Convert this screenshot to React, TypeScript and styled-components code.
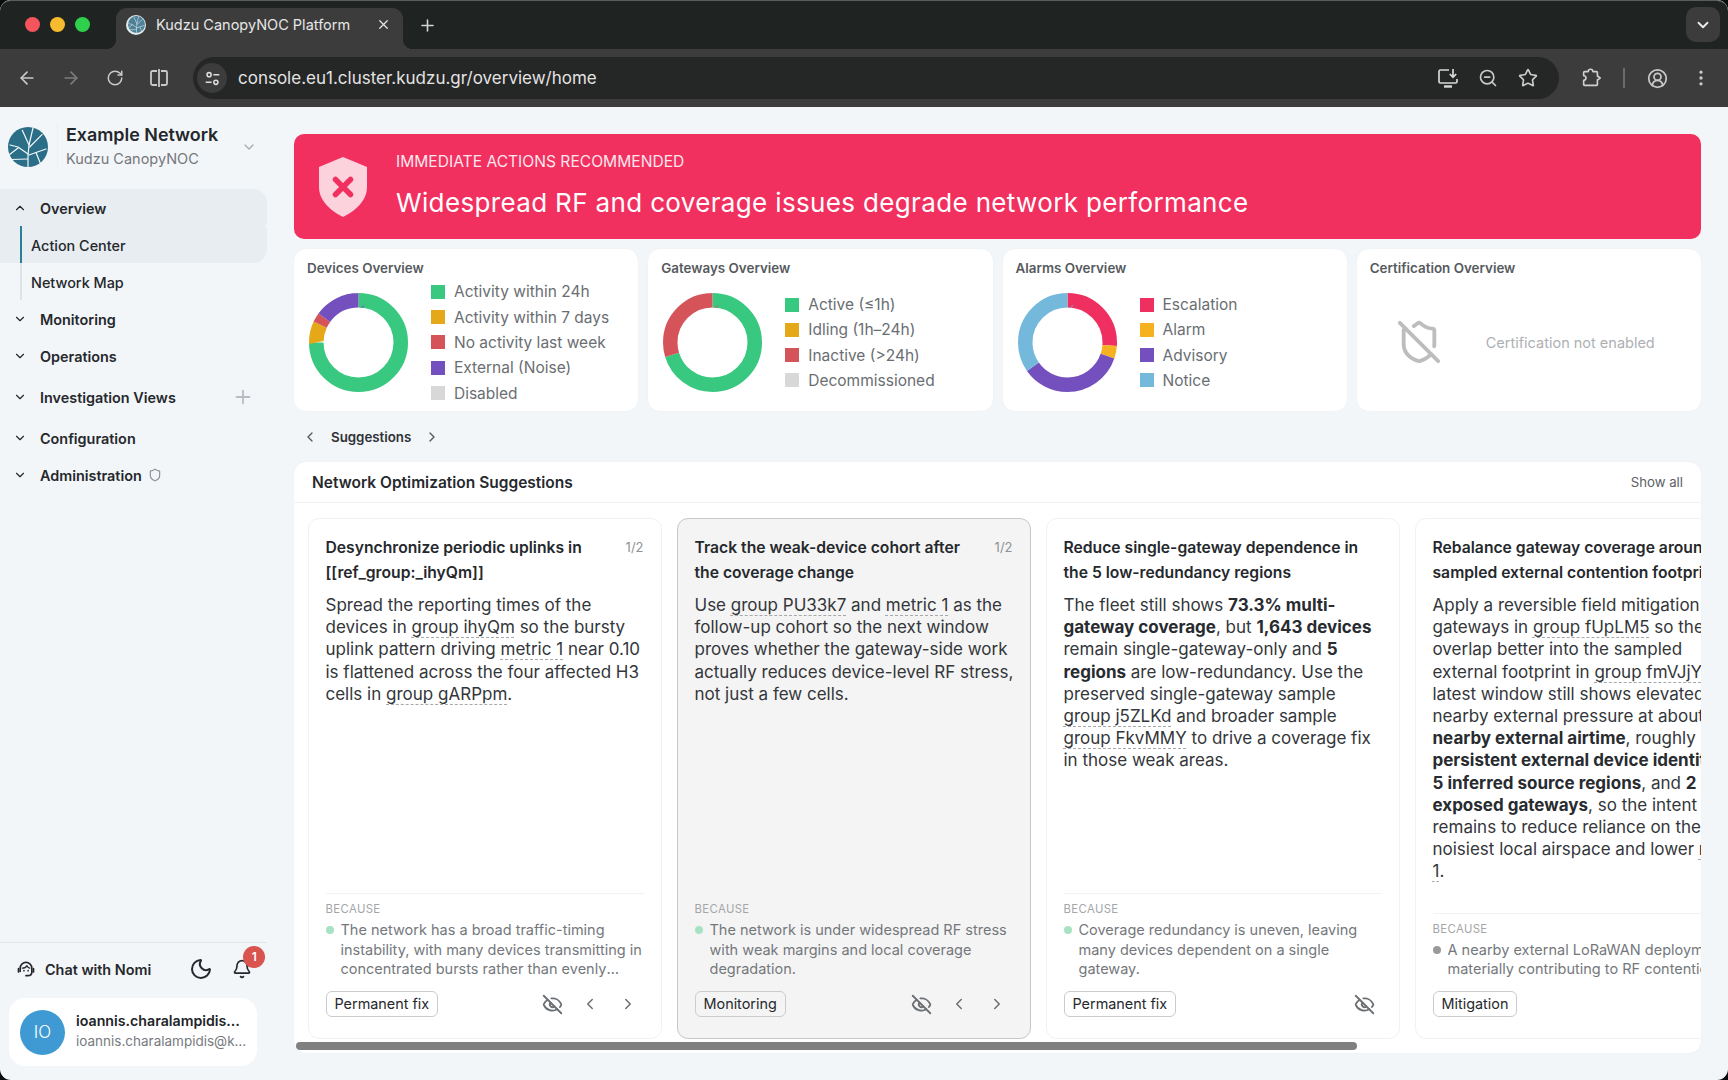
import React from 'react';
import styled, {createGlobalStyle} from 'styled-components';
import {
  ArrowLeft,
  ArrowRight,
  Bell,
  ChevronDown,
  ChevronLeft,
  ChevronRight,
  ChevronUp,
  CircleUserRound,
  EllipsisVertical,
  EyeOff,
  Moon,
  Plus,
  RotateCw,
  Shield,
  ShieldOff,
  Star,
  X,
  ZoomOut
} from 'lucide-react';

const GlobalStyle = createGlobalStyle`
  html, body {
    margin: 0;
    padding: 0;
    height: 100%;
    background: #0c0c0c;
    overflow: hidden;
  }
  #root {
    height: 100%;
  }
  * {
    box-sizing: border-box;
  }
`;

const Frame = styled.div`
  display: flex;
  flex-direction: column;
  width: 1728px;
  height: 1080px;
  border-radius: 11px;
  overflow: hidden;
  background: #f3f6f9;
  font-family: Inter, 'Liberation Sans', sans-serif;
  color: #2c2f33;
`;

const TabStrip = styled.div`
  display: flex;
  align-items: flex-end;
  height: 49px;
  flex: none;
  padding-left: 25px;
  background: #1f2321;
  border-top: 1px solid #5a5d5c;
  border-radius: 11px 11px 0 0;
`;

const Lights = styled.div`
  display: flex;
  gap: 10px;
  align-self: flex-start;
  margin-top: 16px;
`;

const Light = styled.span<{$color: string}>`
  width: 15px;
  height: 15px;
  border-radius: 50%;
  background: ${(p) => p.$color};
`;

const Tab = styled.div`
  position: relative;
  display: flex;
  align-items: center;
  width: 287px;
  height: 41px;
  margin-left: 26px;
  padding: 0 12px 8px 10px;
  background: #3c3c3c;
  border-radius: 11px 11px 0 0;
  color: #e6e6e6;
  font-size: 14.5px;

  &::before,
  &::after {
    content: '';
    position: absolute;
    bottom: 0;
    width: 10px;
    height: 10px;
  }
  &::before {
    left: -10px;
    background: radial-gradient(circle at 0 0, transparent 10px, #3c3c3c 10.5px);
  }
  &::after {
    right: -10px;
    background: radial-gradient(circle at 100% 0, transparent 10px, #3c3c3c 10.5px);
  }
`;

const Favicon = styled.div`
  display: flex;
  align-items: center;
  justify-content: center;
  flex: none;
  width: 20px;
  height: 20px;
  border-radius: 50%;
  background: #e3eaee;
`;

const TabTitle = styled.span`
  flex: 1;
  margin-left: 10px;
`;

const NewTab = styled.div`
  display: flex;
  align-items: center;
  justify-content: center;
  align-self: flex-start;
  width: 24px;
  height: 24px;
  margin: 12px 0 0 12px;
  color: #d5d5d5;
`;

const TabMenu = styled.div`
  display: flex;
  align-items: center;
  justify-content: center;
  align-self: flex-start;
  width: 34px;
  height: 35px;
  margin: 6px 8px 0 auto;
  border-radius: 10px;
  background: #3c3c3c;
  color: #e8e8e8;
`;

const Toolbar = styled.div`
  display: flex;
  align-items: center;
  flex: none;
  height: 58px;
  padding: 0 5px;
  background: #3c3c3c;
  color: #c9c9c9;
`;

const ToolSlot = styled.div<{$width?: number; $dim?: boolean}>`
  display: flex;
  align-items: center;
  justify-content: center;
  flex: none;
  width: ${(p) => p.$width ?? 44}px;
  height: 100%;
  color: ${(p) => (p.$dim ? '#7c7c7c' : 'inherit')};
`;

const AddressBar = styled.div`
  display: flex;
  align-items: center;
  flex: 1;
  height: 42px;
  margin: 0 10px 0 12px;
  padding: 0 11px 0 4px;
  border-radius: 21px;
  background: #252626;
`;

const SiteInfo = styled.div`
  display: flex;
  align-items: center;
  justify-content: center;
  width: 30px;
  height: 30px;
  border-radius: 50%;
  background: #3c3c3c;
`;

const Url = styled.span`
  flex: 1;
  margin-left: 11px;
  color: #e3e3e3;
  font-size: 17px;
`;

const ToolDivider = styled.div`
  display: flex;
  justify-content: center;
  flex: none;
  width: 22px;

  &::after {
    content: '';
    width: 1.5px;
    height: 20px;
    background: #6b6b6b;
  }
`;

const Main = styled.div`
  display: flex;
  flex: 1;
  min-height: 0;
`;

const Sidebar = styled.aside`
  display: flex;
  flex-direction: column;
  flex: none;
  width: 294px;
`;

const Brand = styled.div`
  display: flex;
  align-items: center;
  height: 82px;
  padding: 0 0 3px 8px;
`;

const BrandText = styled.div`
  display: flex;
  flex-direction: column;
  gap: 3px;
  height: 46px;
  margin: 0 0 2px 9px;
  padding-left: 8px;
  border-left: 1px solid #edf0f3;
`;

const BrandName = styled.div`
  font-size: 17.9px;
  line-height: 24px;
  font-weight: 600;
  color: #24272b;
`;

const BrandSub = styled.div`
  font-size: 14.5px;
  line-height: 18px;
  color: #73777c;
`;

const BrandChevron = styled.div`
  display: flex;
  margin-left: 23px;
  color: #a7abb0;
`;

const NavList = styled.nav`
  display: flex;
  flex-direction: column;
  width: 267px;
`;

const NavRow = styled.div<{$active?: boolean; $tall?: boolean}>`
  display: flex;
  align-items: center;
  gap: 13px;
  height: ${(p) => (p.$tall ? 45 : 37)}px;
  padding: 1px 0 0 13px;
  background: ${(p) => (p.$active ? '#e7edf0' : 'transparent')};
  border-radius: ${(p) => (p.$active ? '0 14px 4px 0' : '0')};
  font-size: 14.4px;
  font-weight: 600;
  color: #25282c;
`;

const NavExtra = styled.div`
  display: flex;
  margin-left: auto;
  margin-right: 13px;
  color: #b9bdc2;
`;

const NavBadge = styled.div`
  display: flex;
  margin-left: -7px;
  color: #8d9196;
`;

const SubRow = styled.div<{$active?: boolean}>`
  position: relative;
  display: flex;
  align-items: center;
  height: 37px;
  padding: 1px 0 0 31px;
  background: ${(p) => (p.$active ? '#e7edf0' : 'transparent')};
  border-radius: ${(p) => (p.$active ? '0 4px 14px 0' : '0')};
  font-size: 14.4px;
  font-weight: 500;
  color: #25282c;

  &::before {
    content: '';
    position: absolute;
    left: 20px;
    top: 0;
    bottom: 0;
    width: 2px;
    background: ${(p) => (p.$active ? '#2b7f99' : '#dfe3e6')};
  }
`;

const SideFooter = styled.div`
  margin-top: auto;
  padding-bottom: 14px;
`;

const ChatRow = styled.div`
  display: flex;
  align-items: center;
  width: 267px;
  height: 55px;
  padding: 0 0 2px 16px;
  border-top: 1px solid #e2e6ea;
  font-size: 14.4px;
  font-weight: 600;
  color: #25282c;
`;

const ChatLabel = styled.span`
  margin-left: 9px;
`;

const MoonSlot = styled.div`
  display: flex;
  margin-left: 38px;
`;

const BellSlot = styled.div`
  position: relative;
  display: flex;
  margin-left: 19px;
`;

const BellBadge = styled.span`
  position: absolute;
  top: -13px;
  left: 11px;
  width: 22px;
  height: 22px;
  border-radius: 50%;
  background: #d9534f;
  color: #fff;
  font-size: 12px;
  line-height: 22px;
  text-align: center;
`;

const UserCard = styled.div`
  display: flex;
  align-items: center;
  gap: 11px;
  width: 248px;
  height: 68px;
  margin: 1px 0 0 9px;
  padding: 0 0 2px 11px;
  border-radius: 16px;
  background: #fff;
`;

const Avatar = styled.div`
  display: flex;
  align-items: center;
  justify-content: center;
  flex: none;
  width: 45px;
  height: 45px;
  margin-top: 2px;
  border-radius: 50%;
  background: #3f9ad3;
  color: #fff;
  font-size: 17px;
  font-weight: 300;
`;

const UserText = styled.div`
  display: flex;
  flex-direction: column;
  gap: 4px;
  width: 171px;
`;

const UserName = styled.div`
  overflow: hidden;
  text-overflow: ellipsis;
  white-space: nowrap;
  font-size: 14.2px;
  line-height: 17px;
  font-weight: 600;
  color: #212428;
`;

const UserMail = styled(UserName)`
  font-weight: 400;
  font-size: 13.5px;
  color: #777b80;
`;

const Content = styled.main`
  display: flex;
  flex-direction: column;
  flex: 1;
  min-width: 0;
  padding: 27px 27px 27px 0;
`;

const Banner = styled.section`
  display: flex;
  align-items: center;
  flex: none;
  height: 105px;
  padding-left: 25px;
  border-radius: 10px;
  background: #f23060;
  color: #fff;
`;

const BannerText = styled.div`
  margin: 0 0 2px 29px;
`;

const BannerKicker = styled.div`
  font-size: 15.6px;
  line-height: 20px;
  color: #fde6ec;
`;

const BannerTitle = styled.h1`
  margin: 14px 0 0;
  font-size: 26px;
  line-height: 34px;
  font-weight: 400;
  letter-spacing: 0.35px;
`;

const OverviewGrid = styled.div`
  display: grid;
  grid-template-columns: repeat(4, 1fr);
  gap: 10px;
  flex: none;
  height: 162px;
  margin-top: 10px;
`;

const Panel = styled.section`
  display: flex;
  flex-direction: column;
  padding: 11px 13px 2px;
  border-radius: 12px;
  background: #fff;
  box-shadow: 0 0 1px rgba(40, 50, 60, 0.08);
`;

const PanelTitle = styled.h2`
  margin: 0;
  font-size: 13.4px;
  line-height: 16px;
  font-weight: 600;
  color: #565a5e;
`;

const PanelBody = styled.div`
  display: flex;
  align-items: center;
  flex: 1;
  gap: 23px;
  padding-left: 2px;
`;

const Legend = styled.ul`
  display: flex;
  flex-direction: column;
  margin: 0;
  padding: 0;
  list-style: none;
`;

const LegendItem = styled.li`
  display: flex;
  align-items: center;
  gap: 9px;
  height: 25.3px;
  font-size: 15.5px;
  color: #6a6e72;
`;

const Swatch = styled.span<{$color: string}>`
  flex: none;
  width: 14px;
  height: 14px;
  background: ${(p) => p.$color};
`;

const CertBody = styled.div`
  display: flex;
  align-items: center;
  flex: 1;
  gap: 44px;
  padding: 0 0 1px 26px;
  color: #bdbdbd;
`;

const CertText = styled.span`
  font-size: 14.5px;
  color: #adb0b3;
`;

const SectionNav = styled.div`
  display: flex;
  align-items: center;
  flex: none;
  height: 51px;
  padding-left: 8px;
  color: #55595d;
  font-size: 13.3px;
  font-weight: 600;
`;

const SectionName = styled.span`
  margin: 0 13px 0 13px;
  color: #2e3135;
`;

const SuggestionsPanel = styled.section`
  display: flex;
  flex-direction: column;
  flex: 1;
  min-height: 0;
  overflow: hidden;
  border-radius: 12px;
  background: #fff;
  box-shadow: 0 0 1px rgba(40, 50, 60, 0.1);
`;

const SuggestionsHead = styled.header`
  display: flex;
  align-items: center;
  justify-content: space-between;
  flex: none;
  height: 41px;
  padding: 0 18px;
  border-bottom: 1px solid #f1f2f4;
`;

const SuggestionsTitle = styled.h2`
  margin: 0;
  font-size: 15.5px;
  font-weight: 600;
  color: #26292d;
`;

const ShowAll = styled.span`
  font-size: 13.2px;
  color: #5c6064;
`;

const CardRow = styled.div`
  display: flex;
  flex: 1;
  min-height: 0;
  gap: 15px;
  padding: 15px 0 0 13.5px;
  overflow: hidden;
`;

const Card = styled.article<{$selected?: boolean}>`
  display: flex;
  flex-direction: column;
  flex: 0 0 354px;
  padding: 16px 17px 21px;
  border: 1px solid ${(p) => (p.$selected ? '#c6c7c9' : '#f1f2f3')};
  border-radius: 11px;
  background: ${(p) => (p.$selected ? '#f4f4f4' : '#fff')};
`;

const CardHead = styled.div`
  display: flex;
  align-items: flex-start;
  justify-content: space-between;
  gap: 12px;
`;

const CardTitle = styled.h3<{$nowrap?: boolean}>`
  margin: 0;
  font-size: 15.7px;
  line-height: 25px;
  font-weight: 600;
  color: #25282c;
  white-space: ${(p) => (p.$nowrap ? 'nowrap' : 'normal')};
`;

const Pager = styled.span`
  flex: none;
  font-size: 13px;
  line-height: 25px;
  color: #8f9296;
`;

const CardBody = styled.p<{$nowrap?: boolean}>`
  flex: 1;
  margin: 9px -4px 0 0;
  font-size: 17px;
  line-height: 22.2px;
  color: #33363a;
  white-space: ${(p) => (p.$nowrap ? 'nowrap' : 'normal')};

  strong {
    font-weight: 700;
    color: #282b2f;
  }
`;

const Ref = styled.span`
  text-decoration: underline dashed #a6a9ac 1px;
  text-underline-offset: 4px;
`;

const Because = styled.div`
  padding-top: 8px;
  border-top: 1px solid #f1f2f3;
`;

const BecauseLabel = styled.div`
  font-size: 11.3px;
  line-height: 14px;
  letter-spacing: 0.4px;
  color: #a3a6a9;
`;

const BecauseRow = styled.div`
  display: flex;
  gap: 7px;
  margin-top: 4px;
`;

const Dot = styled.span<{$color: string}>`
  flex: none;
  width: 8px;
  height: 8px;
  margin-top: 6px;
  border-radius: 50%;
  background: ${(p) => p.$color};
`;

const BecauseText = styled.div`
  display: -webkit-box;
  -webkit-box-orient: vertical;
  -webkit-line-clamp: 3;
  overflow: hidden;
  font-size: 14.5px;
  line-height: 19.6px;
  color: #74787c;
`;

const CardFoot = styled.div`
  display: flex;
  align-items: center;
  margin-top: 12px;
  height: 26px;
  color: #6b6f73;
`;

const TagChip = styled.span`
  padding: 0 8px;
  border: 1px solid #c9cbce;
  border-radius: 6px;
  font-size: 14.4px;
  line-height: 24px;
  color: #26292d;
`;

const FootIcons = styled.div`
  display: flex;
  align-items: center;
  gap: 20px;
  margin-left: auto;
  padding-right: 7px;

  svg:first-child:not(:last-child) {
    margin-right: -2px;
  }
`;

const ScrollTrack = styled.div`
  flex: none;
  height: 8px;
  margin: 3px 0;
  padding: 0 2px;
`;

const ScrollThumb = styled.div`
  height: 8px;
  border-radius: 4px;
  background: #808080;
`;

const Logo = ({size, color = '#2a6e87'}: {size: number; color?: string}) => (
  <svg width={size} height={size} viewBox="0 0 40 40" fill="none">
    <circle cx="20" cy="20" r="20" fill={color} />
    <g stroke="#f4f7f9" strokeWidth="1.2" strokeLinecap="round" strokeLinejoin="round">
      <path d="M20 40 L20 28 L21 18 L25 1" />
      <path d="M21 18 L14.300 3.300" />
      <path d="M21.700 20 L34 7.700" />
      <path d="M20 27 L10 20 L2 18" />
      <path d="M10 21 L1 28" />
      <path d="M19.500 32 L3 32.500" />
      <path d="M21 28 L38 22" />
      <path d="M28 25.500 L33 38" />
    </g>
  </svg>
);

const TuneIcon = () => (
  <svg width="17" height="17" viewBox="0 0 20 20" fill="none" stroke="#dedede" strokeWidth="1.8">
    <circle cx="6" cy="5.5" r="2.4" />
    <path d="M11 5.5h7" />
    <circle cx="14" cy="14.5" r="2.4" />
    <path d="M2 14.5h7" />
  </svg>
);

const SplitIcon = () => (
  <svg width="22" height="22" viewBox="0 0 22 22" fill="none" stroke="#c9c9c9" strokeWidth="1.8">
    <path d="M9 4H4.5A1.5 1.5 0 0 0 3 5.500v11A1.500 1.500 0 0 0 4.500 18H9" />
    <path d="M11 2v18" />
    <path d="M13 4h4.500A1.500 1.500 0 0 1 19 5.500v11a1.500 1.500 0 0 1-1.500 1.500H13" />
  </svg>
);

const InstallIcon = () => (
  <svg width="22" height="22" viewBox="0 0 22 22" fill="none" stroke="#d8d8d8" strokeWidth="1.7">
    <path d="M12 3H3.500A1.500 1.500 0 0 0 2 4.500v10A1.500 1.500 0 0 0 3.500 16h15a1.500 1.500 0 0 0 1.500-1.500V12" />
    <path d="M7 19.500h8" strokeWidth="2.400" />
    <path d="M16 2v8M12.800 7l3.200 3.200L19.200 7" />
  </svg>
);

const ExtensionIcon = () => (
  <svg width="22" height="22" viewBox="0 0 24 24" fill="none" stroke="#d0d0d0" strokeWidth="1.8" strokeLinejoin="round">
    <path d="M9 5a2.500 2.500 0 0 1 5 0h4a1 1 0 0 1 1 1v3.800l3 2.200-3 2.200V19a1 1 0 0 1-1 1H5a1 1 0 0 1-1-1v-4.500a2.500 2.500 0 0 0 0-5V6a1 1 0 0 1 1-1z" />
  </svg>
);

const NomiIcon = () => (
  <svg width="20" height="20" viewBox="0 0 24 24" fill="none" stroke="#25282c" strokeWidth="2" strokeLinecap="round" strokeLinejoin="round">
    <path d="M5 15v-4a7 7 0 0 1 14 0v4" />
    <path d="M3 11.500v4M21 11.500v4" />
    <path d="M19 15.500c0 2.500-2 4.500-5 4.500h-2" />
    <path d="M7.500 11c2.500 0 4.500-1 5.500-3 .8 1.500 2 3 3.500 3" strokeWidth="1.500" />
    <path d="M9.500 14h.01M14.500 14h.01" />
  </svg>
);

const AlertShield = () => (
  <svg width="48" height="60" viewBox="0 0 48 60">
    <path d="M24 0 L48 10 V30 C48 44 36 54 24 60 C12 54 0 44 0 30 V10 Z" fill="#fcd2dc" />
    <path d="M16.500 22.500 L31.500 37.500 M31.500 22.500 L16.500 37.500" stroke="#f23060" strokeWidth="5.500" strokeLinecap="round" />
  </svg>
);

interface Segment {
  color: string;
  from: number;
  to: number;
}

const Donut = ({segments}: {segments: Segment[]}) => (
  <svg width="99" height="99" viewBox="0 0 99 99" fill="none">
    {segments.map((s) => (
      <circle
        key={s.color}
        cx="49.5"
        cy="49.5"
        r="42.250"
        stroke={s.color}
        strokeWidth="14.500"
        pathLength={360}
        strokeDasharray={`${s.to - s.from} ${360 - s.to + s.from}`}
        strokeDashoffset={-s.from}
        transform="rotate(-90 49.5 49.5)"
      />
    ))}
  </svg>
);

const GREEN = '#38c87f';
const AMBER = '#e5a818';
const RED = '#d5545a';
const PURPLE = '#7450bf';
const GREY = '#d8d8d8';

const OVERVIEWS = [
  {
    title: 'Devices Overview',
    segments: [
      {color: GREEN, from: 0, to: 270},
      {color: AMBER, from: 270, to: 295},
      {color: RED, from: 295, to: 306},
      {color: PURPLE, from: 306, to: 360}
    ],
    legend: [
      {label: 'Activity within 24h', color: GREEN},
      {label: 'Activity within 7 days', color: AMBER},
      {label: 'No activity last week', color: RED},
      {label: 'External (Noise)', color: PURPLE},
      {label: 'Disabled', color: GREY}
    ]
  },
  {
    title: 'Gateways Overview',
    segments: [
      {color: GREEN, from: 0, to: 253},
      {color: RED, from: 253, to: 360}
    ],
    legend: [
      {label: 'Active (≤1h)', color: GREEN},
      {label: 'Idling (1h–24h)', color: AMBER},
      {label: 'Inactive (>24h)', color: RED},
      {label: 'Decommissioned', color: GREY}
    ]
  },
  {
    title: 'Alarms Overview',
    segments: [
      {color: '#ef2f5f', from: 0, to: 94},
      {color: '#f5b11f', from: 94, to: 109},
      {color: PURPLE, from: 109, to: 235},
      {color: '#74b9dc', from: 235, to: 360}
    ],
    legend: [
      {label: 'Escalation', color: '#ef2f5f'},
      {label: 'Alarm', color: '#f5b11f'},
      {label: 'Advisory', color: PURPLE},
      {label: 'Notice', color: '#74b9dc'}
    ]
  }
];

interface SuggestionProps {
  title: React.ReactNode;
  pager?: boolean;
  selected?: boolean;
  because: string;
  dot?: string;
  tag: string;
  icons?: 'all' | 'hide' | 'none';
  nowrap?: boolean;
  children: React.ReactNode;
}

const Suggestion = ({
  title,
  pager,
  selected,
  because,
  dot = '#a9e2c3',
  tag,
  icons = 'all',
  nowrap,
  children
}: SuggestionProps) => (
  <Card $selected={selected}>
    <CardHead>
      <CardTitle $nowrap={nowrap}>{title}</CardTitle>
      {pager && <Pager>1/2</Pager>}
    </CardHead>
    <CardBody $nowrap={nowrap}>{children}</CardBody>
    <Because>
      <BecauseLabel>BECAUSE</BecauseLabel>
      <BecauseRow>
        <Dot $color={dot} />
        <BecauseText>{because}</BecauseText>
      </BecauseRow>
    </Because>
    <CardFoot>
      <TagChip>{tag}</TagChip>
      {icons !== 'none' && (
        <FootIcons>
          <EyeOff size={21} strokeWidth={2.1} />
          {icons === 'all' && <ChevronLeft size={18} />}
          {icons === 'all' && <ChevronRight size={18} />}
        </FootIcons>
      )}
    </CardFoot>
  </Card>
);

const App = () => (
  <Frame>
    <GlobalStyle />
    <TabStrip>
      <Lights>
        <Light $color="#f4555c" />
        <Light $color="#f6bb2e" />
        <Light $color="#2fd14c" />
      </Lights>
      <Tab>
        <Favicon>
          <Logo size={17} color="#4d8197" />
        </Favicon>
        <TabTitle>Kudzu CanopyNOC Platform</TabTitle>
        <X size={15} />
      </Tab>
      <NewTab>
        <Plus size={19} />
      </NewTab>
      <TabMenu>
        <ChevronDown size={18} strokeWidth={2.500} />
      </TabMenu>
    </TabStrip>
    <Toolbar>
      <ToolSlot>
        <ArrowLeft size={20} />
      </ToolSlot>
      <ToolSlot $dim>
        <ArrowRight size={20} />
      </ToolSlot>
      <ToolSlot>
        <RotateCw size={18} />
      </ToolSlot>
      <ToolSlot>
        <SplitIcon />
      </ToolSlot>
      <AddressBar>
        <SiteInfo>
          <TuneIcon />
        </SiteInfo>
        <Url>console.eu1.cluster.kudzu.gr/overview/home</Url>
        <ToolSlot $width={40}>
          <InstallIcon />
        </ToolSlot>
        <ToolSlot $width={40}>
          <ZoomOut size={20} />
        </ToolSlot>
        <ToolSlot $width={40}>
          <Star size={20} />
        </ToolSlot>
      </AddressBar>
      <ToolSlot>
        <ExtensionIcon />
      </ToolSlot>
      <ToolDivider />
      <ToolSlot>
        <CircleUserRound size={21} />
      </ToolSlot>
      <ToolSlot>
        <EllipsisVertical size={20} />
      </ToolSlot>
    </Toolbar>
    <Main>
      <Sidebar>
        <Brand>
          <Logo size={40} />
          <BrandText>
            <BrandName>Example Network</BrandName>
            <BrandSub>Kudzu CanopyNOC</BrandSub>
          </BrandText>
          <BrandChevron>
            <ChevronDown size={16} />
          </BrandChevron>
        </Brand>
        <NavList>
          <NavRow $active>
            <ChevronUp size={14} />
            Overview
          </NavRow>
          <SubRow $active>Action Center</SubRow>
          <SubRow>Network Map</SubRow>
          <NavRow>
            <ChevronDown size={14} />
            Monitoring
          </NavRow>
          <NavRow>
            <ChevronDown size={14} />
            Operations
          </NavRow>
          <NavRow $tall>
            <ChevronDown size={14} />
            Investigation Views
            <NavExtra>
              <Plus size={22} />
            </NavExtra>
          </NavRow>
          <NavRow>
            <ChevronDown size={14} />
            Configuration
          </NavRow>
          <NavRow>
            <ChevronDown size={14} />
            Administration
            <NavBadge>
              <Shield size={14} />
            </NavBadge>
          </NavRow>
        </NavList>
        <SideFooter>
          <ChatRow>
            <NomiIcon />
            <ChatLabel>Chat with Nomi</ChatLabel>
            <MoonSlot>
              <Moon size={24} />
            </MoonSlot>
            <BellSlot>
              <Bell size={20} />
              <BellBadge>1</BellBadge>
            </BellSlot>
          </ChatRow>
          <UserCard>
            <Avatar>IO</Avatar>
            <UserText>
              <UserName>ioannis.charalampidis@kudzu.gr</UserName>
              <UserMail>ioannis.charalampidis@kudzu.gr</UserMail>
            </UserText>
          </UserCard>
        </SideFooter>
      </Sidebar>
      <Content>
        <Banner>
          <AlertShield />
          <BannerText>
            <BannerKicker>IMMEDIATE ACTIONS RECOMMENDED</BannerKicker>
            <BannerTitle>Widespread RF and coverage issues degrade network performance</BannerTitle>
          </BannerText>
        </Banner>
        <OverviewGrid>
          {OVERVIEWS.map((o) => (
            <Panel key={o.title}>
              <PanelTitle>{o.title}</PanelTitle>
              <PanelBody>
                <Donut segments={o.segments} />
                <Legend>
                  {o.legend.map((l) => (
                    <LegendItem key={l.label}>
                      <Swatch $color={l.color} />
                      {l.label}
                    </LegendItem>
                  ))}
                </Legend>
              </PanelBody>
            </Panel>
          ))}
          <Panel>
            <PanelTitle>Certification Overview</PanelTitle>
            <CertBody>
              <ShieldOff size={46} strokeWidth={2} />
              <CertText>Certification not enabled</CertText>
            </CertBody>
          </Panel>
        </OverviewGrid>
        <SectionNav>
          <ChevronLeft size={16} />
          <SectionName>Suggestions</SectionName>
          <ChevronRight size={16} />
        </SectionNav>
        <SuggestionsPanel>
          <SuggestionsHead>
            <SuggestionsTitle>Network Optimization Suggestions</SuggestionsTitle>
            <ShowAll>Show all</ShowAll>
          </SuggestionsHead>
          <CardRow>
            <Suggestion
              title="Desynchronize periodic uplinks in [[ref_group:_ihyQm]]"
              pager
              tag="Permanent fix"
              because="The network has a broad traffic-timing instability, with many devices transmitting in concentrated bursts rather than evenly spaced reporting intervals."
            >
              Spread the reporting times of the devices in <Ref>group ihyQm</Ref> so the bursty uplink
              pattern driving <Ref>metric 1</Ref> near 0.10 is flattened across the four affected H3
              cells in <Ref>group gARPpm</Ref>.
            </Suggestion>
            <Suggestion
              title="Track the weak-device cohort after the coverage change"
              pager
              selected
              tag="Monitoring"
              because="The network is under widespread RF stress with weak margins and local coverage degradation."
            >
              Use <Ref>group PU33k7</Ref> and <Ref>metric 1</Ref> as the follow-up cohort so the next
              window proves whether the gateway-side work actually reduces device-level RF stress, not
              just a few cells.
            </Suggestion>
            <Suggestion
              title="Reduce single-gateway dependence in the 5 low-redundancy regions"
              tag="Permanent fix"
              icons="hide"
              because="Coverage redundancy is uneven, leaving many devices dependent on a single gateway."
            >
              The fleet still shows <strong>73.3% multi-gateway coverage</strong>, but{' '}
              <strong>1,643 devices</strong> remain single-gateway-only and <strong>5 regions</strong>{' '}
              are low-redundancy. Use the preserved single-gateway sample <Ref>group j5ZLKd</Ref> and
              broader sample <Ref>group FkvMMY</Ref> to drive a coverage fix in those weak areas.
            </Suggestion>
            <Suggestion
              title={
                <>
                  Rebalance gateway coverage around the
                  <br />
                  sampled external contention footprint
                </>
              }
              nowrap
              tag="Mitigation"
              icons="none"
              dot="#9a9a9a"
              because="A nearby external LoRaWAN deployment is materially contributing to RF contention."
            >
              Apply a reversible field mitigation on
              <br />
              gateways in <Ref>group fUpLM5</Ref> so their
              <br />
              overlap better into the sampled
              <br />
              external footprint in <Ref>group fmVJjY</Ref>. The
              <br />
              latest window still shows elevated
              <br />
              nearby external pressure at about 22%
              <br />
              <strong>nearby external airtime</strong>, roughly 40
              <br />
              <strong>persistent external device identities</strong>
              <br />
              <strong>5 inferred source regions</strong>, and <strong>2 heavily</strong>
              <br />
              <strong>exposed gateways</strong>, so the intent
              <br />
              remains to reduce reliance on the
              <br />
              noisiest local airspace and lower <Ref>metric</Ref>
              <br />
              <Ref>1</Ref>.
            </Suggestion>
          </CardRow>
          <ScrollTrack>
            <ScrollThumb style={{width: 1061}} />
          </ScrollTrack>
        </SuggestionsPanel>
      </Content>
    </Main>
  </Frame>
);

export default App;
